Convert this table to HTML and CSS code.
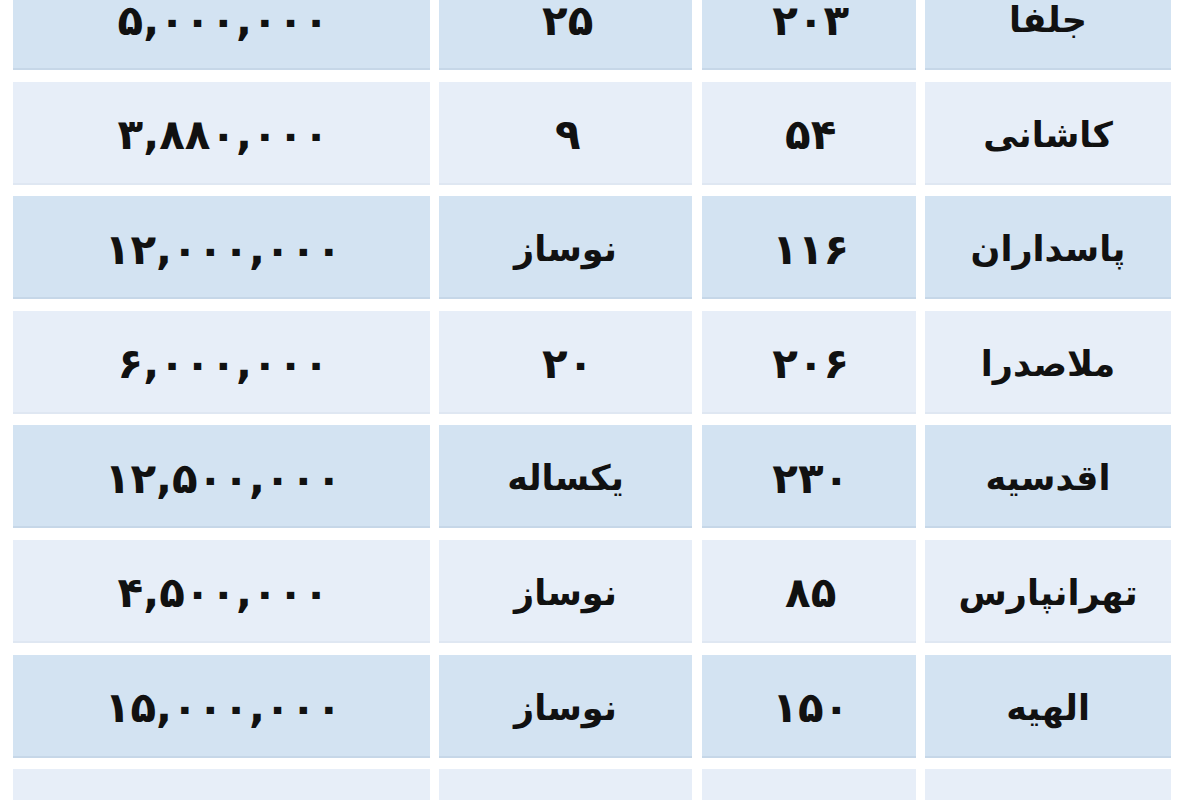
FILE: index.html
```html
<!DOCTYPE html>
<html lang="fa" dir="rtl">
<head>
<meta charset="utf-8">
<title>جدول</title>
<link rel="stylesheet" href="styles.css">
</head>
<body>
<div class="table">
  <div class="row dark"><div class="cell">جلفا</div><div class="cell num">۲۰۳</div><div class="cell num">۲۵</div><div class="cell num">۵,۰۰۰,۰۰۰</div></div>
  <div class="row light"><div class="cell">کاشانی</div><div class="cell num">۵۴</div><div class="cell num">۹</div><div class="cell num">۳,۸۸۰,۰۰۰</div></div>
  <div class="row dark"><div class="cell">پاسداران</div><div class="cell num">۱۱۶</div><div class="cell">نوساز</div><div class="cell num">۱۲,۰۰۰,۰۰۰</div></div>
  <div class="row light"><div class="cell">ملاصدرا</div><div class="cell num">۲۰۶</div><div class="cell num">۲۰</div><div class="cell num">۶,۰۰۰,۰۰۰</div></div>
  <div class="row dark"><div class="cell">اقدسیه</div><div class="cell num">۲۳۰</div><div class="cell">یکساله</div><div class="cell num">۱۲,۵۰۰,۰۰۰</div></div>
  <div class="row light"><div class="cell">تهرانپارس</div><div class="cell num">۸۵</div><div class="cell">نوساز</div><div class="cell num">۴,۵۰۰,۰۰۰</div></div>
  <div class="row dark"><div class="cell">الهیه</div><div class="cell num">۱۵۰</div><div class="cell">نوساز</div><div class="cell num">۱۵,۰۰۰,۰۰۰</div></div>
  <div class="row light"><div class="cell">ونک</div><div class="cell num">۱۲۰</div><div class="cell num">۵</div><div class="cell num">۹,۰۰۰,۰۰۰</div></div>
</div>
</body>
</html>
```

FILE: styles.css
```css
html, body {
  margin: 0;
  padding: 0;
  background: #ffffff;
  overflow: hidden;
  height: 800px;
}

.table {
  display: flex;
  flex-direction: column;
  gap: 11.6px;
  margin-top: -33px;
  padding-right: 29px;
  padding-left: 13px;
  font-family: "DejaVu Sans", "Noto Sans", sans-serif;
  font-weight: bold;
  color: #111111;
}

.row {
  display: grid;
  grid-template-columns: 246px 214px 253px 417px;
  column-gap: 9.5px;
  height: 103px;
}

.cell {
  display: flex;
  align-items: center;
  justify-content: center;
  font-size: 35px;
  box-sizing: border-box;
  padding-top: 5px;
}

.num {
  direction: ltr;
  font-size: 42px;
  letter-spacing: 4.5px;
  padding-left: 4.5px;
}

.dark .cell {
  background: #d3e3f2;
  border-bottom: 2px solid #c6d7e8;
}

.light .cell {
  background: #e7eef8;
  border-bottom: 2px solid #dfe7f2;
}
```
